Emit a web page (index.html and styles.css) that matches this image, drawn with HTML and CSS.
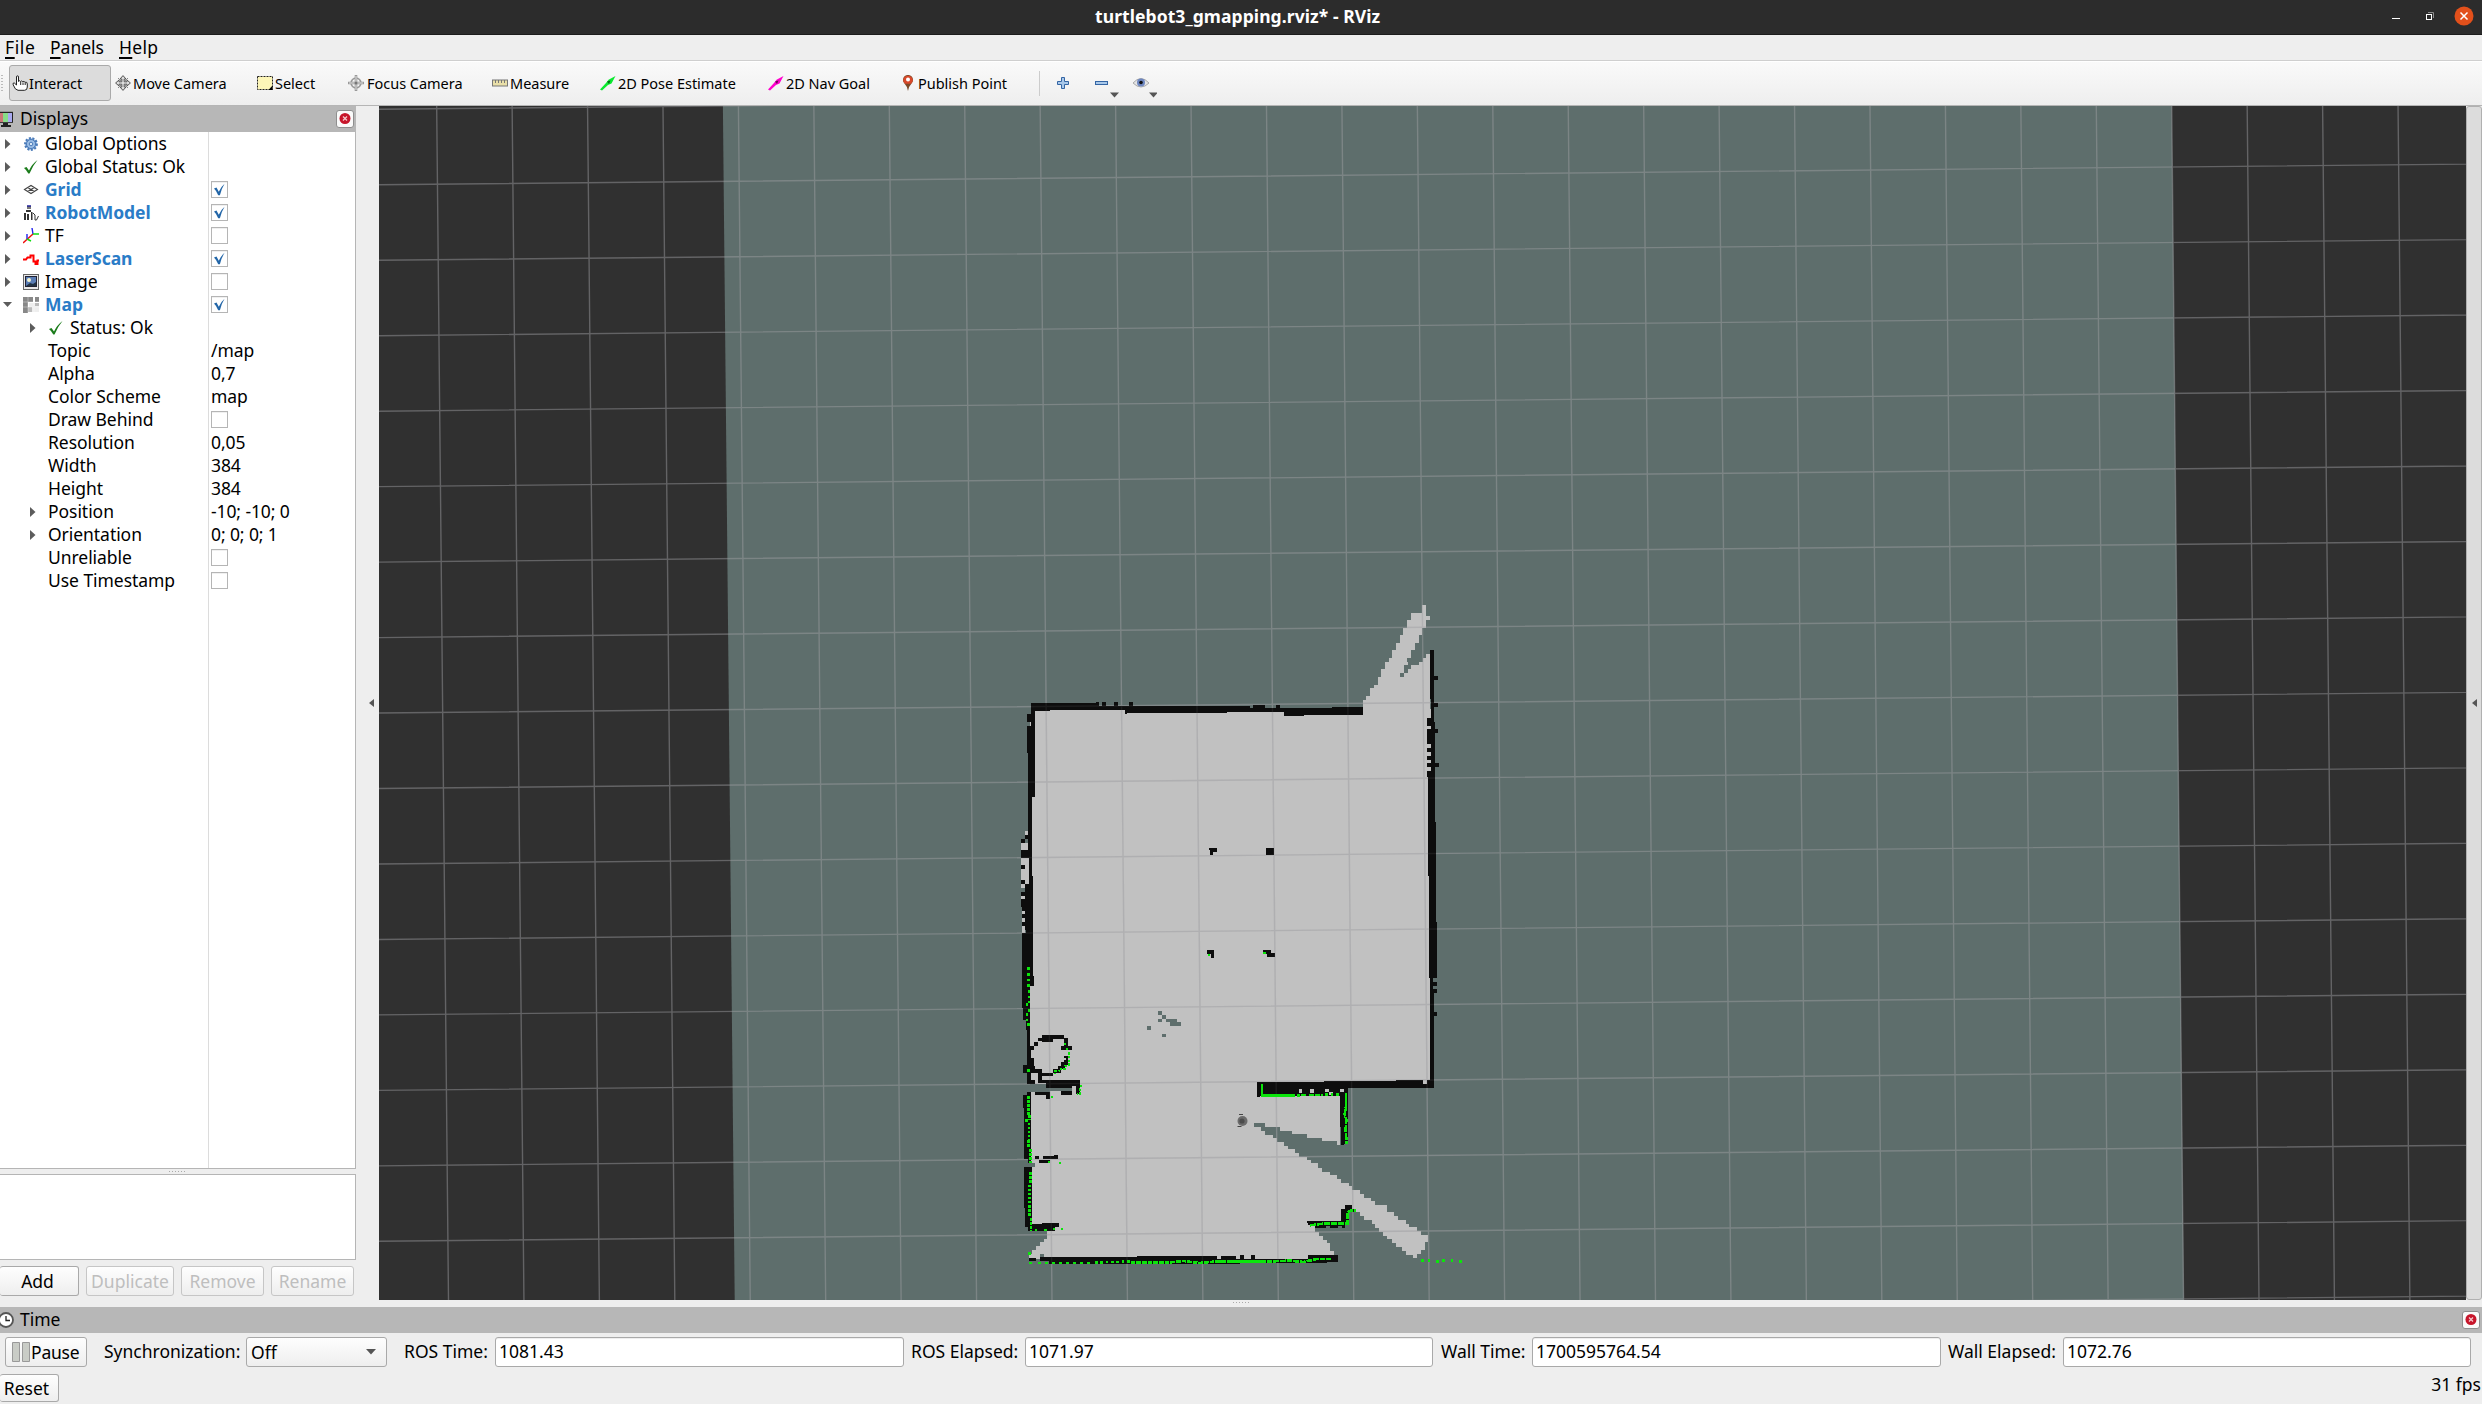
FILE: index.html
```html
<!DOCTYPE html>
<html lang="en">
<head>
<meta charset="utf-8">
<title>turtlebot3_gmapping.rviz* - RViz</title>
<link rel="stylesheet" href="styles.css">
</head>
<body>
<svg width="0" height="0" class="defs">
  <defs>
    <symbol id="arrow" viewBox="0 0 6 10"><path d="M0 0L5.5 5L0 10Z" fill="#5c5c5c"/></symbol>
    <symbol id="ok" viewBox="0 0 14 14"><path d="M0 8L2.5 7L5 10.500Q8 4 13.500 0Q8.500 6 5.500 13.500H4.300Q2.500 10 0 8Z" fill="#1b7c1b"/></symbol>
    <symbol id="tick" viewBox="0 0 17 17"><path d="M3 7.500L5.500 6.600L7.800 10.800Q9.800 6 13.600 2.800Q10.300 8 8.900 14.200H7.200Q5.600 10 3 7.500Z" fill="#2366a8"/></symbol>
    <symbol id="close" viewBox="0 0 18 18"><rect x=".5" y=".5" width="17" height="17" rx="2.500" fill="#fafafa" stroke="#8f8f8f"/><circle cx="9" cy="8.500" r="5.500" fill="#c7162b"/><path d="M7 6.500l4 4m0-4l-4 4" stroke="#f6c9ce" stroke-width="1.300"/></symbol>
    <symbol id="goal" viewBox="0 0 16 16"><path d="M0 14.500L6 8L8.500 4.800L15.500 1L11.500 8.500L8 10L2 15.500Z" fill="currentColor"/><path d="M7 6.500L10.500 5.500L9 9Z" fill="#000" opacity=".55"/></symbol>
  </defs>
</svg>

<header class="titlebar">
  <span class="title">turtlebot3_gmapping.rviz* - RViz</span>
  <svg class="winbtns" width="92" height="34" viewBox="0 0 92 34">
    <path d="M2 18.500H10" stroke="#fff"/>
    <rect x="36.500" y="14.500" width="5" height="5" fill="none" stroke="#fff"/>
    <path d="M38 12.500H43.500V18" fill="none" stroke="#8d8d8d"/>
    <circle cx="74" cy="16" r="9.500" fill="#e2501b"/>
    <path d="M70.500 12.500l7 7m0-7l-7 7" stroke="#fff" stroke-width="1.500"/>
  </svg>
</header>

<nav class="menubar"><span class="m-file"><u>F</u>ile</span><span class="m-panels"><u>P</u>anels</span><span class="m-help"><u>H</u>elp</span></nav>

<div class="toolbar">
  <i class="grip"></i>
  <div class="tool active"><svg width="16" height="16" viewBox="0 0 16 16"><path d="M4.500 10V2Q4.500 .8 5.500 .8T6.500 2V6.500Q7.500 5 8.500 6.500Q9.800 5.200 10.800 6.800Q12 5.800 13 7.300Q15.300 6.500 15.300 9V12Q15.300 15.300 12.500 15.300H6Q3 15 1.200 9.800Q.5 7.500 2.300 8Z" fill="#fff" stroke="#222"/><path d="M8.700 7v3M11 7.500v2.500M13.200 8v2" stroke="#222" fill="none"/></svg><span class="t0">Interact</span></div>
  <div class="tool"><svg width="16" height="16" viewBox="0 0 16 16"><path d="M8 .6L11 4H9.200V6.800H12V5L15.400 8L12 11V9.200H9.200V12H11L8 15.400L5 12H6.800V9.200H4V11L.6 8L4 5V6.800H6.800V4H5Z" fill="#ddd" stroke="#555"/><path d="M3 3l3 3M13 3l-3 3M3 13l3-3M13 13l-3-3" stroke="#888"/></svg><span class="t1">Move Camera</span></div>
  <div class="tool"><svg width="16" height="16" viewBox="0 0 16 16"><rect x=".5" y="1.500" width="15" height="13" fill="#fdf6b8" stroke="#222" stroke-dasharray="2 1"/><path d="M15.500 10.500V15H11.500Z"/></svg><span class="t2">Select</span></div>
  <div class="tool focus"><svg width="16" height="16" viewBox="0 0 16 16"><circle cx="8" cy="8" r="4.800" fill="none" stroke="#999" stroke-width="1.800"/><path d="M8 0V16M0 8H16" stroke="#999" stroke-width="2.600"/><path d="M8 1V15M1 8H15" stroke="#ddd"/><circle cx="8" cy="8" r="1.500" fill="#777"/></svg><span class="t3">Focus Camera</span></div>
  <div class="tool"><svg width="16" height="16" viewBox="0 0 16 16"><rect x=".5" y="5" width="15" height="6" fill="#e9dfa8" stroke="#777"/><path d="M3.500 5v3M6.500 5v3M9.500 5v3M12.500 5v3" stroke="#777"/></svg><span class="t4">Measure</span></div>
  <div class="tool green"><svg width="16" height="16"><use href="#goal"/></svg><span class="t5">2D Pose Estimate</span></div>
  <div class="tool pink"><svg width="16" height="16"><use href="#goal"/></svg><span class="t6">2D Nav Goal</span></div>
  <div class="tool pin"><svg width="12" height="16" viewBox="0 0 12 16"><path d="M6 16Q5 11 2.300 8.300A5 5 0 1 1 9.700 8.300Q7 11 6 16Z" fill="#7b4a28"/><path d="M1.200 5.500A4.800 4.800 0 1 1 10.800 5.500Q10.500 7.500 9 8.700H3Q1.400 7.500 1.200 5.500Z" fill="#d9492b"/><circle cx="6" cy="4.500" r="2" fill="#fff"/></svg><span class="t7">Publish Point</span></div>
  <i class="sep"></i>
  <svg class="extras" width="110" height="34" viewBox="0 0 110 34">
    <path d="M14.500 11.500h3v4h4v3h-4v4h-3v-4h-4v-3h4z" fill="#a8c8ea" stroke="#3465a4"/>
    <rect x="48.500" y="15.500" width="12" height="3" fill="#a8c8ea" stroke="#3465a4"/>
    <path d="M86 17Q94 8 102 17Q94 25 86 17Z" fill="#e4e4e4" stroke="#aaa"/><circle cx="94" cy="16.500" r="4" fill="#6d86c0"/><circle cx="94" cy="16.500" r="1.800" fill="#111"/>
    <path d="M63 26.500h9l-4.500 5zM102 26.500h9l-4.500 5z" fill="#555"/>
  </svg>
</div>

<main class="work">
  <aside class="displays">
    <div class="dockhead"><svg class="hicon" width="14" height="16" viewBox="0 0 14 16"><rect x="-3" y=".8" width="16" height="11" fill="#222"/><rect x="-2" y="2" width="5" height="9" fill="#c77"/><rect x="3" y="2" width="5" height="9" fill="#8d8"/><rect x="8" y="2" width="4" height="9" fill="#a9a9f0"/><path d="M3 12h5v2h3v2H1v-2h2z" fill="#222"/></svg><span class="h-displays">Displays</span><svg class="x" width="18" height="18"><use href="#close"/></svg></div>
    <div class="tree">
      <div class="row"><svg class="ar"><use href="#arrow"/></svg><svg class="ic" viewBox="0 0 16 16"><circle cx="8" cy="8" r="5.800" fill="#8fb4e0" stroke="#4a7ab8" stroke-width="2.200" stroke-dasharray="2 1.500"/><circle cx="8" cy="8" r="4.500" fill="#9dbfe6" stroke="#4a7ab8"/><circle cx="8" cy="8" r="1.800" fill="#dce9f7" stroke="#4a7ab8"/></svg><span class="name n0">Global Options</span></div>
      <div class="row"><svg class="ar"><use href="#arrow"/></svg><svg class="ic" viewBox="-1 -1 16 16"><use href="#ok" width="14" height="14"/></svg><span class="name n1">Global Status: Ok</span></div>
      <div class="row on"><svg class="ar"><use href="#arrow"/></svg><svg class="ic" viewBox="0 0 16 16"><path d="M1.500 7.500L8 3.500L14.500 7.500L8 11.500ZM4.700 5.500L11.300 9.500M11.300 5.500L4.700 9.500" fill="none" stroke="#444" stroke-width="1.100"/></svg><span class="name n2">Grid</span><span class="box"><svg><use href="#tick"/></svg></span></div>
      <div class="row on"><svg class="ar"><use href="#arrow"/></svg><svg class="ic" viewBox="0 0 16 16"><path d="M4 1h4v3H4z" fill="#777"/><path d="M4 1h4" stroke="#229" stroke-width="1.500"/><path d="M3 5h5v2H3zM1 8h2v7H1zM4 9h2v6H4zM8 7h1.500v8H8z" fill="#333"/><path d="M10 8l2 2v5h1.500l2-4" fill="none" stroke="#333"/></svg><span class="name n3">RobotModel</span><span class="box"><svg><use href="#tick"/></svg></span></div>
      <div class="row"><svg class="ar"><use href="#arrow"/></svg><svg class="ic" viewBox="0 0 16 16"><path d="M0 15L10 6" stroke="#e11" stroke-width="1.500"/><path d="M4 11V6M10 6L9 0" stroke="#22e" stroke-width="1.400"/><path d="M10 6H16M4 11L8 13" stroke="#1d1" stroke-width="1.400"/></svg><span class="name n4">TF</span><span class="box"></span></div>
      <div class="row on"><svg class="ar"><use href="#arrow"/></svg><svg class="ic" viewBox="0 0 16 16"><path d="M0 8.500H3L4.500 6.500H7.500V4.500H10.500V10.500H12.500V13H14.500V9.500H16" fill="none" stroke="#f00" stroke-width="2"/></svg><span class="name n5">LaserScan</span><span class="box"><svg><use href="#tick"/></svg></span></div>
      <div class="row"><svg class="ar"><use href="#arrow"/></svg><svg class="ic" viewBox="0 0 16 16"><rect x=".5" y=".5" width="15" height="15" fill="#e8e8e8" stroke="#666"/><rect x="2.500" y="2.500" width="11" height="10" fill="#5a7db5" stroke="#223"/><circle cx="6" cy="6" r="2" fill="#f4f4d0"/><path d="M3 12l4-3 3 1 3-2v4z" fill="#234"/></svg><span class="name n6">Image</span><span class="box"></span></div>
      <div class="row on"><svg class="ad" viewBox="0 0 10 6"><path d="M0 0H9L4.500 5Z" fill="#5c5c5c"/></svg><svg class="ic" viewBox="0 0 16 16"><path d="M0 0H10V5H5V16H0ZM12 0H16V5H12Z" fill="#888"/><path d="M6 6H16V15H6Z" fill="#eee"/><path d="M5 10H9V15H5ZM12 6H16V9H12Z" fill="#bbb"/><path d="M0 5H16M0 10H16M5 0V16M11 0V16" stroke="#fff" stroke-width=".6" opacity=".6"/></svg><span class="name n7">Map</span><span class="box"><svg><use href="#tick"/></svg></span></div>
      <div class="row sub st"><svg class="ar"><use href="#arrow"/></svg><svg class="ic" viewBox="-1 -1 16 16"><use href="#ok" width="14" height="14"/></svg><span class="name n8">Status: Ok</span></div>
      <div class="row sub"><span class="name n9">Topic</span><span class="val">/map</span></div>
      <div class="row sub"><span class="name n10">Alpha</span><span class="val">0,7</span></div>
      <div class="row sub"><span class="name n11">Color Scheme</span><span class="val">map</span></div>
      <div class="row sub"><span class="name n12">Draw Behind</span><span class="box"></span></div>
      <div class="row sub"><span class="name n13">Resolution</span><span class="val">0,05</span></div>
      <div class="row sub"><span class="name n14">Width</span><span class="val">384</span></div>
      <div class="row sub"><span class="name n15">Height</span><span class="val">384</span></div>
      <div class="row sub"><svg class="ar"><use href="#arrow"/></svg><span class="name n16">Position</span><span class="val">-10; -10; 0</span></div>
      <div class="row sub"><svg class="ar"><use href="#arrow"/></svg><span class="name n17">Orientation</span><span class="val">0; 0; 0; 1</span></div>
      <div class="row sub"><span class="name n18">Unreliable</span><span class="box"></span></div>
      <div class="row sub"><span class="name n19">Use Timestamp</span><span class="box"></span></div>
    </div>
    <div class="splitter"></div>
    <div class="desc"></div>
    <div class="btns"><button class="b-add">Add</button><button class="b-dup" disabled>Duplicate</button><button class="b-rem" disabled>Remove</button><button class="b-ren" disabled>Rename</button></div>
  </aside>
  <div class="collapse"><svg width="6" height="9" viewBox="0 0 6 9"><path d="M5 0V8L0 4Z" fill="#555"/></svg></div>
  <svg class="view" width="2087" height="1194" viewBox="379 106 2087 1194">
    <defs>
      <!-- each set of grid lines is one wide stroke cut into 1.4px dashes -->
      <g id="cells" transform="matrix(1 -0.0099 0.0099 1 436.700 108.740)" fill="none" stroke="#a0a0a4">
        <path d="M-76.130 600H2200" stroke-width="1400" stroke-dasharray="1.400 74.030"/>
        <path d="M1000 -76.160V1400" stroke-width="2400" stroke-dasharray="1.400 74.060"/>
      </g>
      <clipPath id="room"><rect x="1000" y="680" width="460" height="600"/></clipPath>
    </defs>
    <rect x="379" y="106" width="2087" height="1194" fill="#303030"/>
    <path d="M722.900 106H2171.700L2183.800 1300H734.700Z" fill="#5e6e6c"/>
    <!-- explored floor -->
    <g fill="#c1c1c1" shape-rendering="crispEdges">
      <g transform="translate(1330 590) scale(.33333)">
        <path d="M99 375V330H108V318H120V294H132V285H144V261H153V237H165V216H177V204H186V180H198V159H210V135H219V114H231V90H243V69H276V45H288V78H300V90H288V114H276V135H267V159H255V180H243V204H231V216H234V225H222V249H210V261H222V249H234V237H243V225H267V216H279V204H288V192H300V780H99Z"/>
      </g>
      <g transform="translate(1000 680) scale(.33333)">
        <path d="M95 88H1295V1215H780V1260H90V102H95ZM75 453H84V465H75ZM63 489H84V510H63ZM63 534H87V624H63ZM63 648H75V657H63ZM66 681H75V760H66Z"/>
      </g>
      <g transform="translate(1000 940) scale(.33333)">
        <path d="M90 430H105V444H216V465H93ZM90 455H780V957H87V942H96V930H108V918H120V906H132V897H141V870H96V681H105V669H90Z"/>
      </g>
      <g transform="translate(1220 1040) scale(.33333)">
        <path d="M0 120H384V168H360V315H351V303H306V294H261V282H216V272H180V261H135V249H102V261H123V272H135V285H159V294H171V306H192V318H204V327H225V339H237V351H261V360H273V369H294V384H306V396H330V405H351V417H363V429H387V438H396V450H420V462H432V474H453V483H465V495H501V516H522V528H534V540H558V552H567V561H591V573H603V585H624V606H615V630H603V642H591V654H579V645H558V633H546V621H528V609H516V597H501V588H489V576H477V564H465V552H456V540H432V528H420V516H375V552H285V576H297V588H309V600H321V609H330V633H342V660H0Z"/>
      </g>
    </g>
    <use href="#cells" opacity=".46"/>
    <!-- unexplored cells inside the room -->
    <g fill="#5e6e6c" shape-rendering="crispEdges" transform="translate(1000 680) scale(.33333)">
      <path d="M474 993h12v12h-12zM486 1005h12v12h-12zM474 1017h12v9h-12zM498 1017h33v9h12v12h-33v-12h-12zM441 1038h12v12h-12zM486 1062h12v9h-12zM90 1212h48v12h78v9h-66v3h-60zM120 1722h12v9h-12zM90 1449h15v12h-15zM762 1329h33v12h-33z"/>
    </g>
    <!-- walls -->
    <g fill="#0d0d0d" shape-rendering="crispEdges">
      <g transform="translate(1330 590) scale(.33333)">
        <path d="M300 180H312V258H324V270H312V339H324V351H312V396H315V417H324V429H315V519H327V531H315V560H291V543H303V531H291V519H303V510H291V498H303V486H291V474H303V462H291V417H303V408H291V384H303V327H300Z"/>
      </g>
      <g transform="translate(1000 680) scale(.33333)">
        <path d="M93 69H288V66H297V78H306V66H318V78H342V66H354V78H387V66H399V78H750V84H759V75H795V84H828V75H840V84L1050 82H1089V105H912V108H852V97H681V99H381V102H375V91H150V94H105V351H96V588H99V888H102V918H90V1210H81V1050H78V1020H69V984H66V760H78V750H75V738H66V726H75V714H66V702H75V693H66V682H63V657H75V648H63V636H75V612H87V534H63V510H84V477H75V489H63V477H75V465H84V219H81V138H93V126H81V102H93ZM63 555h12v12h-12zM63 600h12v12h-12z"/>
        <path d="M1284 288H1305V427H1308V726H1311V894H1299V906H1311V918H1299V927H1311V939H1302V996H1311V1008H1302V1224H1044V1260H1020V1248H780V1251H771V1206H864L1164 1202L1269 1200V1212H1281V1200H1290V894H1287V588H1284Z"/>
        <path d="M627 504H651V516H639V526H630V510H627ZM798 504h24v21h-24zM621 810H642V834H633V822H621ZM789 810H813V819H825V831H801V822H789Z"/>
      </g>
      <g transform="translate(1000 940) scale(.33333)">
        <path d="M126 285H192V294H203V318H216V330H183V318H192V297H159V306H126V303H114V309H114V318H102V329H93V354H102V378H105V387H126V399H159V408H126V420H240V462H228V438H216V444H138V430H114V399H93V420H105V432H81V399H69V375H81V318H90V318H102V309H102V306H114V294H126ZM159 387H174V378H183V366H192V360H198V354H192V348H204V375H195V387H183V399H159ZM105 456H150V477H138V465H105ZM183 453H216V465H183ZM69 465H81V456H93V669H84V657H72V504H69ZM105 648h12v9h-12zM129 648H163V645H174V657H129ZM117 660H150V669H117ZM72 681H96V852H126V849H177V861H165V873H84V861H75V804H72ZM87 954H108V963H87ZM120 951H411V948H651V957H663V948H708V957H720V945H732V957H753V945H765V957H924V945H1014V965H981V968H720V972H147V963H120Z"/>
      </g>
      <g transform="translate(1220 1040) scale(.33333)">
        <path d="M360 135H384V312H372V315H363V260H360ZM261 543H363V507H375V495H396V507H405V516H387V552H375V564H366V558H354V564H330V558H318V564H285V555H264Z"/>
      </g>
    </g>
    <path transform="translate(1000 680) scale(.33333)" fill="#c1c1c1" shape-rendering="crispEdges" d="M897 1227h9v12h-9zM930 1227h12v12h-12zM975 1227h12v9h12v9h-12v-9h-12zM1020 1227h12v9h-12zM216 1221h12v24h-12z"/>
    <g clip-path="url(#room)" opacity=".1"><use href="#cells"/></g>
    <!-- laser hits -->
    <g fill="none" stroke="#0be50b" stroke-width="8" shape-rendering="crispEdges">
      <g transform="translate(1000 940) scale(.33333)">
        <path d="M85 82V140M87 150V190M81 190V200M87 208V216M81 220V242M85 249V257M86 388V396" stroke-dasharray="8 9"/>
        <path d="M192 313h7M198 327h8M207 337v40M200 378h-6v8h-16v8h-12v7M243 435l-4 28h-9M154 470h6M143 665h7M177 668h6M159 868h7M184 867h6M105 871h8M133 871h8" stroke-width="6" stroke-dasharray="7 4"/>
        <path d="M86 468V525M89 525V540M79 538V546M87 548V600M86 600V622M91 627V668M92 697V730M88 734V790M89 795V830M93 834V873M88 936V945M92 965V974" stroke-dasharray="8 4"/>
        <path d="M114 969H275" stroke-dasharray="8 13"/>
        <path d="M285 967L390 965" stroke-dasharray="8 8"/>
        <path d="M392 968H500L550 963L600 969L640 965H780" stroke-dasharray="14 3"/>
        <path d="M623 46h7" stroke-width="6"/>
      </g>
      <g transform="translate(1220 1040) scale(.33333)">
        <path d="M126 132V172M122 166H212"/>
        <path d="M212 166H240M243 165H262M268 165H310" stroke-dasharray="14 4"/>
        <path d="M315 164H360" stroke-dasharray="8 9"/>
        <path d="M378 160V200L374 222L379 240L377 270L380 312" stroke-dasharray="22 2"/>
        <path d="M270 556L310 551H372L383 550V518L392 511H408" stroke-dasharray="18 3"/>
        <path d="M0 665H130L210 662L250 666L290 657L334 657" stroke-dasharray="17 3"/>
        <path d="M603 661h8M623 661h8M648 664h8M666 661h8M692 662h8M717 664h8"/>
        <path d="M130 -261h8" stroke-width="6"/>
      </g>
    </g>
    <!-- robot -->
    <circle cx="1242.500" cy="1121" r="5" fill="#6b6b6b"/><circle cx="1242" cy="1121" r="2.600" fill="#4c4c4c"/><path d="M1239 1114.500h4M1237.500 1126.500h4" stroke="#444"/>
  </svg>
  <div class="rightbar"><svg width="6" height="9" viewBox="0 0 6 9"><path d="M5 0V8L0 4Z" fill="#555"/></svg></div>
</main>

<section class="time">
  <div class="splitter wide"></div>
  <div class="dockhead"><svg class="hicon" width="14" height="18" viewBox="0 0 14 18"><circle cx="6" cy="9" r="7" fill="#fff" stroke="#555" stroke-width="1.800"/><path d="M6 5V9.500H10" fill="none" stroke="#222" stroke-width="1.300"/></svg><span class="h-time">Time</span><svg class="x" width="18" height="18"><use href="#close"/></svg></div>
  <div class="fields">
    <button class="pause"><svg width="20" height="20" viewBox="0 0 20 20"><path d="M1.500 .5h7v19h-7zM11.500 .5h7v19h-7z" fill="#c9ccc6" stroke="#999"/></svg><span>Pause</span></button>
    <label class="l-sync">Synchronization:</label><div class="combo"><span>Off</span><svg width="10" height="6" viewBox="0 0 10 6"><path d="M0 0H10L5 5.500Z" fill="#555"/></svg></div>
    <label class="l-rt">ROS Time:</label><div class="input"><span class="v1">1081.43</span></div>
    <label class="l-re">ROS Elapsed:</label><div class="input"><span class="v1">1071.97</span></div>
    <label class="l-wt">Wall Time:</label><div class="input"><span class="v2">1700595764.54</span></div>
    <label class="l-we">Wall Elapsed:</label><div class="input"><span class="v1">1072.76</span></div>
  </div>
  <div class="foot"><button class="reset">Reset</button><span class="fps">31 fps</span></div>
</section>
</body>
</html>
```
FILE: styles.css
```css
* { box-sizing: border-box; }
body { margin: 0; width: 2482px; height: 1404px; overflow: hidden; background: #eee; color: #000; font: 17.5px/23px "Noto Sans", "Liberation Sans", sans-serif; white-space: nowrap; display: flex; flex-direction: column; }
svg { display: block; flex: none; }
.defs { position: absolute; }
button { font: inherit; color: inherit; margin: 0; padding: 0; border: 1px solid #a9a9a9; border-radius: 3px; background: linear-gradient(#fefefe, #eee); }
button:disabled { color: #bebebe; border-color: #c6c6c6; }

.titlebar { height: 35px; flex: none; background: #2c2c2c; border-bottom: 1px solid #1c1c1c; display: grid; grid-template-columns: 1095px 1fr 92px; color: #fff; font-weight: 700; letter-spacing: 0.08px; }
.title { grid-column: 2; line-height: 33px; }
.winbtns { grid-column: 3; }

.menubar { height: 26px; flex: none; border-bottom: 1px solid #cfcfcf; display: grid; grid-template-columns: 45px 69px 60px; padding-left: 5px; line-height: 24px; }
.menubar u { text-underline-offset: 3px; text-decoration-thickness: 2px; }
.m-file { letter-spacing: 0.6px; }
.m-help { letter-spacing: 0.3px; }

.toolbar { height: 45px; flex: none; background: linear-gradient(#fafafa, #eee); border-bottom: 1px solid #b5b5b5; box-shadow: inset 0 1px #fff; display: grid; grid-template-columns: 9px 103px 142px 91px 144px 108px 168px 134px 140px 8px 110px; align-items: center; font-size: 14.5px; }
.grip { width: 4px; height: 18px; background: radial-gradient(circle, #bbb 0.8px, transparent 1px) 0 0 / 4px 3px; }
.tool { height: 36px; display: flex; align-items: center; gap: 2px; padding-left: 3px; }
.tool span { letter-spacing: -0.02px; }
.tool.active { width: 102px; background: #dcdcdc; border: 1px solid #aaa; border-radius: 3px; padding-left: 2px; gap: 1px; }
.tool.focus { gap: 3px; }
.green { color: #0bea2f; }
.pink { color: #f0c; }
.green span, .pink span { color: #000; }
.tool.pin { gap: 4px; }
.sep { width: 1px; height: 25px; background: #ccc; }

.work { height: 1194px; flex: none; display: flex; }
.displays { width: 356px; display: flex; flex-direction: column; }
.dockhead { height: 26px; flex: none; background: #b7b7b7; display: flex; align-items: center; gap: 6px; padding-bottom: 1px; }
.x { margin-left: auto; margin-right: 2px; }
.tree { height: 1037px; flex: none; background: linear-gradient(90deg, transparent 208px, #dcdcdc 208px, #dcdcdc 209px, transparent 209px) #fff; border: solid #b5b5b5; border-width: 0 1px 1px 0; }
.row { height: 23px; display: grid; grid-template-columns: 5px 18px 22px 166px 1fr; align-items: center; }
.row.sub { grid-template-columns: 30px 18px 0 163px 1fr; }
.row.st { grid-template-columns: 30px 18px 22px 141px 1fr; }
.ar { grid-column: 2; grid-row: 1; width: 6px; height: 10px; }
.ad { grid-column: 1 / 3; grid-row: 1; width: 10px; height: 6px; margin-left: 3px; }
.ic { grid-column: 3; grid-row: 1; width: 16px; height: 16px; }
.name { grid-column: 4; grid-row: 1; letter-spacing: -0.05px; }
.val, .box { grid-column: 5; grid-row: 1; }
.val { letter-spacing: -0.1px; }
.on .name { color: #2a7cc7; font-weight: 700; }
.box { width: 17px; height: 17px; border: 1px solid #b5b5b5; background: #fff; box-shadow: inset 0 1px #f0f0f0; }
.box svg { width: 17px; height: 17px; margin: -1px; }
.splitter { height: 5px; flex: none; background: radial-gradient(circle, #aaa 0.8px, transparent 1px) 0 1px / 3px 3px repeat-x content-box; padding: 0 171px 0 168px; }
.splitter.wide { height: 7px; padding: 0 1232px; }
.desc { height: 86px; flex: none; background: #fff; border: 1px solid #b5b5b5; border-left: 0; }
.btns { display: grid; grid-template-columns: 79px 88px 83px 83px; gap: 7px; height: 30px; margin-top: 6px; }
.b-add { border-left: 0; padding-right: 3px; }
.collapse { width: 23px; display: flex; align-items: center; padding-left: 13px; }
.rightbar { width: 16px; background: #dcdcdc; border: 1px solid #b0b0b0; border-radius: 3px; display: flex; align-items: center; padding-left: 5px; }

.time { flex: 1; display: flex; flex-direction: column; }
.fields { display: grid; grid-template-columns: 82px 17px 142px 141px 17px 91px 409px 7px 114px 408px 8px 91px 409px 7px 115px 408px; height: 29px; margin: 4px 0 0 5px; align-items: stretch; line-height: 28px; }
.pause { display: flex; align-items: center; padding-left: 5px; line-height: 26px; }
.pause span { letter-spacing: -0.2px; }
.l-sync { grid-column: 3; }
.l-rt { grid-column: 6; }
.l-re { grid-column: 9; }
.l-wt { grid-column: 12; }
.l-we { grid-column: 15; }
.combo { border: 1px solid #a9a9a9; border-radius: 3px; background: linear-gradient(#fefefe, #eee); display: flex; align-items: center; justify-content: space-between; padding: 0 10px 0 4px; }
.input { border: 1px solid #a9a9a9; border-radius: 3px; background: #fff; box-shadow: inset 0 1px #eee; padding-left: 3px; line-height: 27px; }
.foot { display: flex; justify-content: space-between; margin-top: 8px; padding-right: 1px; line-height: 21px; }
.reset { width: 59px; height: 28px; border-left: 0; padding-right: 5px; line-height: 26px; }
```
